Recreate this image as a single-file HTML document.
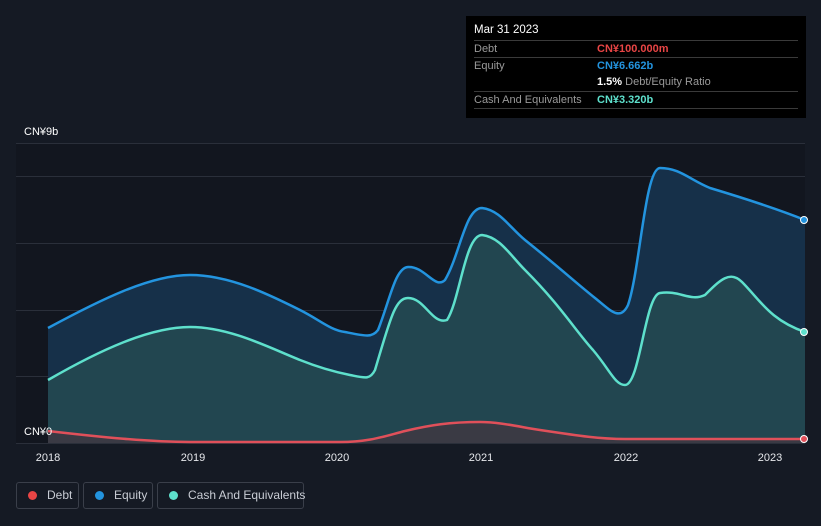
<!DOCTYPE html>
<html><head><style>
html,body{margin:0;width:821px;height:526px;overflow:hidden}
body{background:#151a24;font-family:"Liberation Sans",sans-serif;position:relative}
.tip{position:absolute;left:466px;top:16px;width:340px;height:102px;background:#000;color:#fff;font-size:11px}
.row{position:absolute;left:8px;width:324px;border-top:1px solid #3a3a3a;height:17px;line-height:17px;color:#9a9a9a}
.v{position:absolute;left:123px;font-weight:bold}
.leg{position:absolute;top:482px;height:27px;border:1px solid #3a3f4a;border-radius:3px;color:#c8ccd4;font-size:12px;line-height:25px;box-sizing:border-box;white-space:nowrap}
.dot{display:inline-block;width:9px;height:9px;border-radius:50%;margin:0 10px 0 11px;vertical-align:-1px}
</style></head><body>
<svg width="821" height="526" style="position:absolute;left:0;top:0">
<rect x="16" y="143" width="789" height="300" fill="#12161f"/>
<g stroke="#2a2f3a" stroke-width="1">
<line x1="16" y1="143.5" x2="805" y2="143.5"/><line x1="16" y1="176.5" x2="805" y2="176.5"/>
<line x1="16" y1="243.5" x2="805" y2="243.5"/><line x1="16" y1="310.5" x2="805" y2="310.5"/>
<line x1="16" y1="376.5" x2="805" y2="376.5"/><line x1="16" y1="443.5" x2="805" y2="443.5"/>
</g>
<path d="M48,328 C100,300 150,275 190,275 C230,275 270,295 300,310 C320,320 330,330 345,332 C365,336 372,338 378,330 C390,300 395,268 408,267 C425,266 435,290 445,280 C460,255 465,208 482,208 C500,210 510,228 525,240 C560,268 575,282 595,298 C610,310 620,322 628,305 C640,270 645,168 660,168 C680,168 690,180 710,188 C750,200 780,210 805,220 L805,443 L48,443 Z" fill="#163049"/>
<path d="M48,380 C100,350 150,327 190,327 C230,327 270,348 300,360 C320,368 335,372 350,375 C365,378 370,380 375,370 C390,320 395,298 408,298 C425,298 432,325 447,320 C460,300 465,235 482,235 C500,237 510,255 525,270 C560,305 575,330 593,350 C610,370 615,385 625,385 C640,385 645,295 660,293 C680,290 690,302 705,295 C720,280 730,270 742,282 C760,300 770,320 805,332 L805,443 L48,443 Z" fill="#224650"/>
<path d="M48,431 C100,437 150,442 190,442 L340,442 C370,442 385,436 405,431 C430,425 450,422 480,422 C500,422 520,427 540,430 C580,436 600,439 625,439 L805,439 L805,443 L48,443Z" fill="#3a3a44"/>
<path d="M48,328 C100,300 150,275 190,275 C230,275 270,295 300,310 C320,320 330,330 345,332 C365,336 372,338 378,330 C390,300 395,268 408,267 C425,266 435,290 445,280 C460,255 465,208 482,208 C500,210 510,228 525,240 C560,268 575,282 595,298 C610,310 620,322 628,305 C640,270 645,168 660,168 C680,168 690,180 710,188 C750,200 780,210 805,220" fill="none" stroke="#2394df" stroke-width="2.5"/>
<path d="M48,380 C100,350 150,327 190,327 C230,327 270,348 300,360 C320,368 335,372 350,375 C365,378 370,380 375,370 C390,320 395,298 408,298 C425,298 432,325 447,320 C460,300 465,235 482,235 C500,237 510,255 525,270 C560,305 575,330 593,350 C610,370 615,385 625,385 C640,385 645,295 660,293 C680,290 690,302 705,295 C720,280 730,270 742,282 C760,300 770,320 805,332" fill="none" stroke="#5ee0cc" stroke-width="2.5"/>
<path d="M48,431 C100,437 150,442 190,442 L340,442 C370,442 385,436 405,431 C430,425 450,422 480,422 C500,422 520,427 540,430 C580,436 600,439 625,439 L805,439" fill="none" stroke="#e0505a" stroke-width="2.5"/>
<circle cx="804" cy="220" r="3.5" fill="#2394df" stroke="#fff" stroke-width="1"/>
<circle cx="804" cy="332" r="3.5" fill="#5ee0cc" stroke="#fff" stroke-width="1"/>
<circle cx="804" cy="439" r="3.5" fill="#e0505a" stroke="#fff" stroke-width="1"/>
<g fill="#fff" font-size="11" font-family="Liberation Sans">
<text x="24" y="135">CN¥9b</text><text x="24" y="435">CN¥0</text>
</g>
<g fill="#e6e8ec" font-size="11" font-family="Liberation Sans" text-anchor="middle">
<text x="48" y="461">2018</text><text x="193" y="461">2019</text><text x="337" y="461">2020</text>
<text x="481" y="461">2021</text><text x="626" y="461">2022</text><text x="770" y="461">2023</text>
</g>
</svg>
<div class="tip">
<div style="position:absolute;left:8px;top:8px;font-size:11.5px">Mar 31 2023</div>
<div class="row" style="top:24px">Debt<span class="v" style="color:#e84545">CN¥100.000m</span></div>
<div class="row" style="top:41px">Equity<span class="v" style="color:#2394df">CN¥6.662b</span></div>
<div class="row" style="top:58px;border-top:none"><span class="v" style="color:#fff">1.5% <span style="color:#9a9a9a;font-weight:normal">Debt/Equity Ratio</span></span></div>
<div class="row" style="top:75px">Cash And Equivalents<span class="v" style="color:#5ee0cc">CN¥3.320b</span></div>
<div class="row" style="top:92px;height:0"></div>
</div>
<div class="leg" style="left:16px;width:63px"><span class="dot" style="background:#e84545"></span>Debt</div>
<div class="leg" style="left:83px;width:70px"><span class="dot" style="background:#2394df"></span>Equity</div>
<div class="leg" style="left:157px;width:147px"><span class="dot" style="background:#5ee0cc"></span>Cash And Equivalents</div>
</body></html>
